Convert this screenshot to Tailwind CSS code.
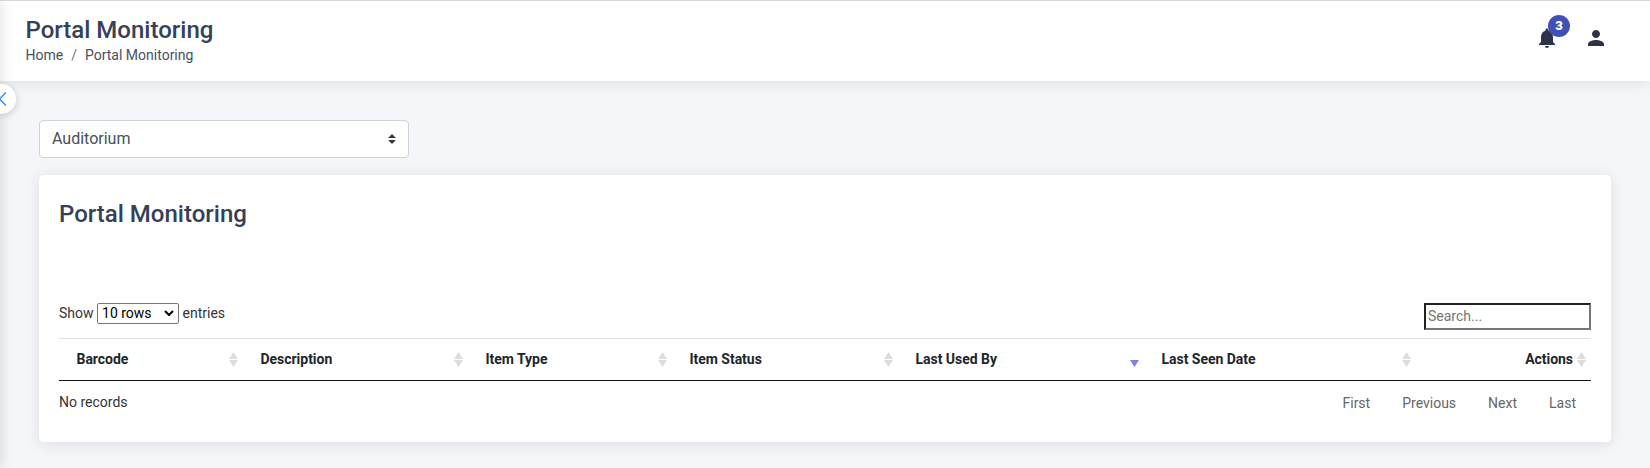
<!DOCTYPE html>
<html lang="en">
<head>
<meta charset="utf-8">
<title>Portal Monitoring</title>
<script src="https://cdn.jsdelivr.net/npm/@tailwindcss/browser@4"></script>
</head>
<body class="relative h-[468px] overflow-hidden bg-[#f5f6fa] font-[Roboto,sans-serif] text-sm text-[#212529]">
<svg class="hidden">
  <symbol id="sort" viewBox="0 0 9 15"><path class="fill-[#dddddd]" d="M4.5 0 9 7H0zM0 8h9l-4.500 7z"/></symbol>
  <symbol id="sort-desc" viewBox="0 0 9 15"><path class="fill-[#7e7ee4]" d="M0 8h9l-4.500 7z"/></symbol>
</svg>
<header class="relative flex h-[81px] justify-between border-t border-[#d9d9d9] bg-white pr-[42px] pl-[25.500px] shadow-[0_0_15px_rgba(0,0,0,0.12)]">
  <div class="pt-[15px]">
    <h1 class="text-2xl leading-[29px] font-medium text-[#364057]">Portal Monitoring</h1>
    <nav class="flex text-sm leading-[21px] text-[#4a4f62]"><span>Home</span><span class="px-2 text-[#6c757d]">/</span><span>Portal Monitoring</span></nav>
  </div>
  <div class="flex items-start gap-[25px] pt-[25px]">
    <div class="relative">
      <svg class="size-6" viewBox="0 0 24 24" fill="#2e3349"><path d="M12 22c1.100 0 2-.9 2-2h-4c0 1.100.89 2 2 2zm6-6v-5c0-3.070-1.640-5.640-4.500-6.320V4c0-.83-.67-1.500-1.500-1.500s-1.500.67-1.500 1.500v.68C7.630 5.360 6 7.920 6 11v5l-2 2v1h16v-1l-2-2z"/></svg>
      <span class="absolute -top-[11px] left-[13px] flex size-[22px] items-center justify-center rounded-full bg-[#3f51b5] text-[13px] font-black text-white">3</span>
    </div>
    <svg class="size-6" viewBox="0 0 24 24" fill="#2e3349"><path d="M12 12c2.210 0 4-1.790 4-4s-1.790-4-4-4-4 1.790-4 4 1.790 4 4 4zm0 2c-2.670 0-8 1.340-8 4v2h16v-2c0-2.660-5.330-4-8-4z"/></svg>
  </div>
</header>
<div class="absolute top-px -left-5 h-[467px] w-5 shadow-[0_0_15px_rgba(0,0,0,0.14)]"></div>
<button class="absolute top-[84px] -left-[14px] flex size-[30px] items-center justify-center rounded-full bg-white shadow-[2px_2px_6px_rgba(0,0,0,0.12)]">
  <svg class="size-[14px]" viewBox="0 0 14 14" fill="none" stroke="#2a8cff" stroke-width="1.300"><path d="M12 .5 5.500 7l6.500 6.500"/></svg>
</button>
<main class="px-[39px] pt-[39px]">
  <div class="flex h-[38px] w-[370px] items-center justify-between rounded border border-[#ced4da] bg-white pr-3 pl-3 text-base text-[#495057]">
    <span>Auditorium</span>
    <svg class="h-[10px] w-2" viewBox="0 0 4 5"><path fill="#343a40" d="M2 0L0 2h4zm0 5L0 3h4z"/></svg>
  </div>
  <section class="mt-[17px] h-[267px] rounded-[5px] bg-white px-5 pt-[25px] shadow-[0_2px_15px_rgba(0,0,0,0.1)]">
    <h2 class="text-2xl leading-[29px] font-medium text-[#364057]">Portal Monitoring</h2>
    <div class="mt-[74px] flex h-[35px] items-start justify-between">
      <label class="flex items-center text-[#333333]"><span class="-mt-[2px]">Show</span>
        <span class="mx-[3.500px] flex h-[21px] w-[82px] items-center justify-between rounded-[2px] border border-[#767676] pr-[4px] pb-px pl-[4px] text-black"><span>10 rows</span>
          <svg class="h-[6px] w-[10px]" viewBox="0 0 10 6" fill="none" stroke="#000" stroke-width="2"><path d="M1 1l4 4 4-4"/></svg>
        </span><span class="-mt-[2px]">entries</span></label>
      <input type="text" placeholder="Search..." class="h-[27px] w-[167px] border-2 border-t-[#212121] border-r-[#767676] border-b-[#767676] border-l-[#212121] px-[2px] pb-px text-sm placeholder:text-[#757575]">
    </div>
    <div class="grid h-[43px] grid-cols-[184px_225px_204px_226px_246px_272px_1fr] border-t border-b border-t-[#dee2e6] border-b-[#111111] font-bold tracking-[-0.03px]">
      <div class="flex items-center justify-between pr-[5px] pl-[17.500px]"><span class="-mt-px">Barcode</span><svg class="h-[15px] w-[9px]"><use href="#sort"/></svg></div>
      <div class="flex items-center justify-between pr-[5px] pl-[17.500px]"><span class="-mt-px">Description</span><svg class="h-[15px] w-[9px]"><use href="#sort"/></svg></div>
      <div class="flex items-center justify-between pr-[5px] pl-[17.500px]"><span class="-mt-px">Item Type</span><svg class="h-[15px] w-[9px]"><use href="#sort"/></svg></div>
      <div class="flex items-center justify-between pr-[5px] pl-[17.500px]"><span class="-mt-px">Item Status</span><svg class="h-[15px] w-[9px]"><use href="#sort"/></svg></div>
      <div class="flex items-center justify-between pr-[5px] pl-[17.500px]"><span class="-mt-px">Last Used By</span><svg class="h-[15px] w-[9px]"><use href="#sort-desc"/></svg></div>
      <div class="flex items-center justify-between pr-[5px] pl-[17.500px]"><span class="-mt-px">Last Seen Date</span><svg class="h-[15px] w-[9px]"><use href="#sort"/></svg></div>
      <div class="flex items-center justify-end gap-1 pr-[5px]"><span class="-mt-px">Actions</span><svg class="h-[15px] w-[9px]"><use href="#sort"/></svg></div>
    </div>
    <div class="flex justify-between pt-[11px] leading-[21px] text-[#333333]">
      <span>No records</span>
      <div class="flex gap-8 pt-px pr-[15px] text-[#666666]"><span>First</span><span>Previous</span><span>Next</span><span>Last</span></div>
    </div>
  </section>
</main>
</body>
</html>
